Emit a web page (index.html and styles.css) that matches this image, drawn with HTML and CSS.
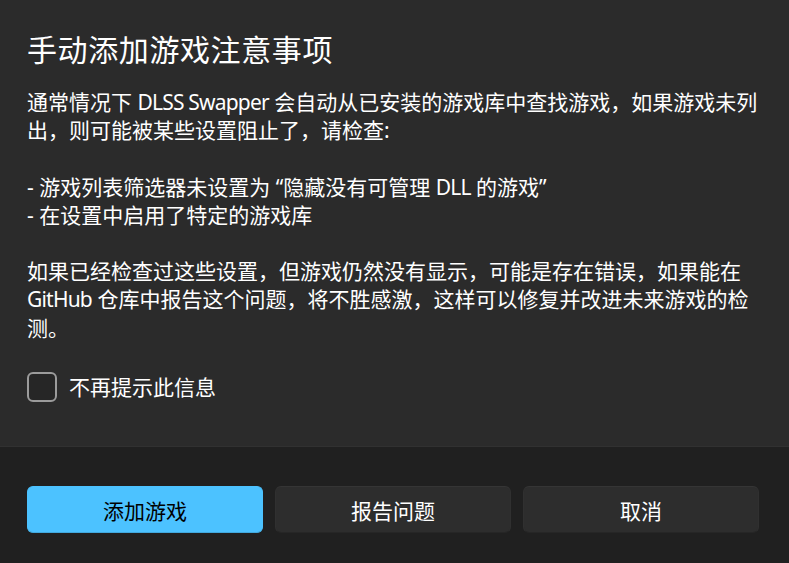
FILE: index.html
```html
<!DOCTYPE html>
<html lang="zh-CN">
<head>
<meta charset="utf-8">
<link rel="stylesheet" href="styles.css">
</head>
<body>
<div class="dialog">
  <div class="content">
    <h1 class="title">手动添加游戏注意事项</h1>
    <div class="body">
      <p>通常情况下 <span class="en">DLSS Swapper</span> 会自动从已安装的游戏库中查找游戏，如果游戏未列出，则可能被某些设置阻止了，请检查:</p>
      <p class="blank">&nbsp;</p>
      <p>- 游戏列表筛选器未设置为 “隐藏没有可管理 <span class="en">DLL</span> 的游戏”</p>
      <p>- 在设置中启用了特定的游戏库</p>
      <p class="blank">&nbsp;</p>
      <p>如果已经检查过这些设置，但游戏仍然没有显示，可能是存在错误，如果能在 <span class="en">GitHub</span> 仓库中报告这个问题，将不胜感激，这样可以修复并改进未来游戏的检测。</p>
    </div>
    <label class="check">
      <span class="box"></span>
      <span class="check-label">不再提示此信息</span>
    </label>
  </div>
  <div class="footer">
    <button class="btn primary">添加游戏</button>
    <button class="btn">报告问题</button>
    <button class="btn">取消</button>
  </div>
</div>
</body>
</html>
```
FILE: styles.css
```css
* { box-sizing: border-box; }
html, body {
  margin: 0;
  padding: 0;
  width: 789px;
  height: 563px;
  overflow: hidden;
  background: #202020;
}
body {
  font-family: "Noto Sans", "Noto Sans CJK SC", sans-serif;
  color: #ffffff;
}
.dialog {
  display: flex;
  flex-direction: column;
  height: 563px;
}
.content {
  height: 447px;
  background: #2b2b2b;
  border-bottom: 1px solid #313131;
  padding: 29px 26px 0 27px;
}
.title {
  margin: 0;
  font-size: 30px;
  letter-spacing: 0.6px;
  line-height: 42px;
  font-weight: 400;
}
.body {
  margin-top: 17px;
  font-size: 21px;
  line-height: 28.2px;
}
.body p { margin: 0; }
.en { letter-spacing: -0.8px; }
.check {
  display: flex;
  align-items: center;
  gap: 12px;
  margin-top: 30px;
  height: 30px;
}
.box {
  width: 30px;
  height: 30px;
  border: 2px solid #9b9b9b;
  border-radius: 6px;
  background: #262626;
}
.check-label {
  font-size: 21px;
  line-height: 28px;
}
.footer {
  flex: 1;
  background: #202020;
  display: flex;
  gap: 12px;
  padding: 39px 30px 0 27px;
  align-items: flex-start;
}
.btn {
  flex: 1;
  height: 47px;
  border-radius: 6px;
  border: 1px solid #303030;
  border-top-color: #353535;
  border-bottom-color: #262626;
  background: #2d2d2d;
  color: #ffffff;
  font-family: "Noto Sans", "Noto Sans CJK SC", sans-serif;
  font-size: 21px;
  padding: 0;
}
.btn.primary {
  background: #4cc2ff;
  border-color: #4cc2ff;
  border-bottom-color: #42a9de;
  color: #000000;
}
```
